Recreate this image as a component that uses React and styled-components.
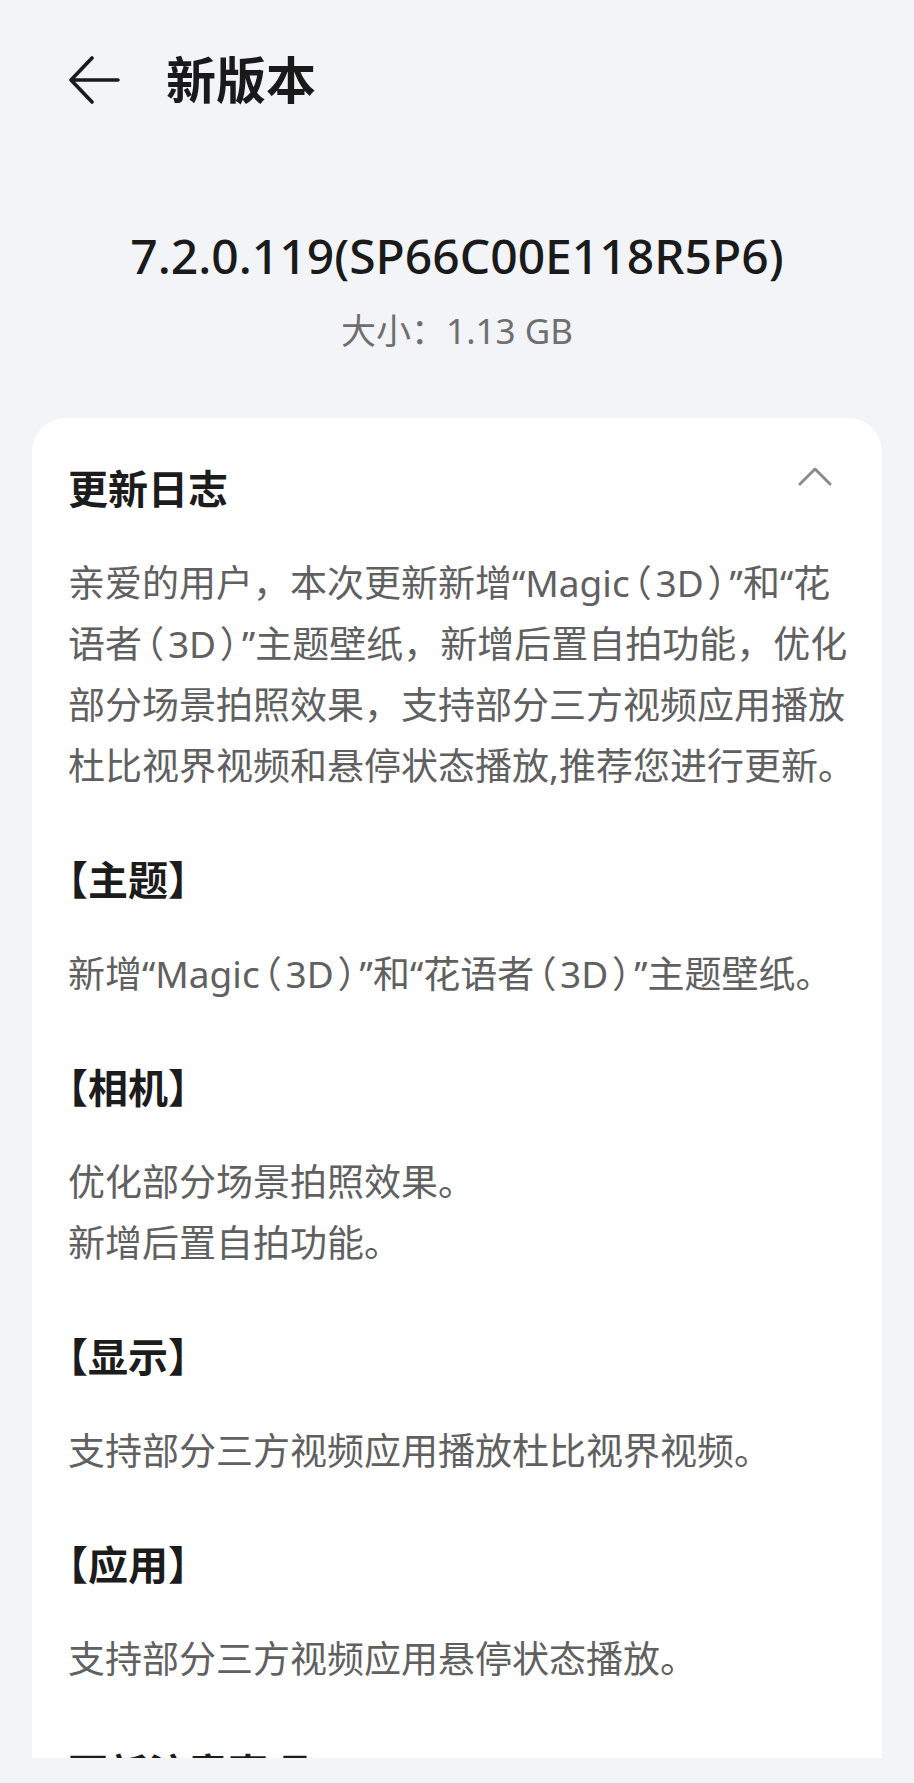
import styled, { createGlobalStyle } from "styled-components";

const GlobalStyle = createGlobalStyle`
  html, body {
    margin: 0;
    padding: 0;
    background: #f3f4f8;
  }
  body {
    font-family: "Noto Sans", "Noto Sans CJK SC", sans-serif;
    -webkit-font-smoothing: antialiased;
  }
`;

const Page = styled.div`
  width: 914px;
  height: 1783px;
  overflow: hidden;
  background: #f3f4f8;
  display: flex;
  flex-direction: column;
`;

const Header = styled.header`
  display: flex;
  align-items: center;
  gap: 46px;
  height: 60px;
  margin-top: 50px;
  padding-left: 68px;
`;

const BackButton = styled.button`
  display: flex;
  align-items: center;
  justify-content: center;
  width: 52px;
  height: 52px;
  padding: 0;
  border: none;
  background: none;
  color: #1a1a1a;
`;

const Title = styled.h1`
  margin: 0;
  font-size: 50px;
  line-height: 60px;
  font-weight: 700;
  color: #1a1a1a;
`;

const VersionBox = styled.div`
  display: flex;
  flex-direction: column;
  align-items: center;
  margin-top: 116px;
`;

const Version = styled.div`
  font-size: 48px;
  line-height: 60px;
  font-weight: 500;
  color: #1a1a1a;
`;

const Size = styled.div`
  margin-top: 23px;
  font-size: 35px;
  line-height: 44px;
  color: #6f6f6f;
`;

const Card = styled.section`
  margin: 65px 32px 0;
  height: 1340px;
  overflow: hidden;
  box-sizing: border-box;
  padding: 41px 36px 0;
  background: #ffffff;
  border-radius: 34px 34px 0 0;
`;

const CardHead = styled.div`
  display: flex;
  align-items: center;
  justify-content: space-between;
  height: 60px;
`;

const CardTitle = styled.h2`
  margin: 0;
  font-size: 40px;
  line-height: 60px;
  font-weight: 700;
  color: #1c1c1c;
`;

const Chevron = styled.span`
  display: flex;
  margin-right: 14px;
  margin-top: -26px;
  color: #8c8c8c;
`;

const Paragraph = styled.p`
  margin: 33px 0 0;
  font-size: 37px;
  line-height: 61px;
  color: #606060;
  white-space: nowrap;
`;

const Paren = styled.span`
  font-feature-settings: "halt";
  padding: 0 0.1em;
`;

const Section = styled.div`
  margin-top: 54px;
`;

const SectionTitle = styled.h3`
  margin: 0;
  font-size: 40px;
  line-height: 60px;
  font-weight: 700;
  color: #1c1c1c;
  font-feature-settings: "halt";
`;

const intro = [
  "亲爱的用户，本次更新新增“Magic（3D）”和“花",
  "语者（3D）”主题壁纸，新增后置自拍功能，优化",
  "部分场景拍照效果，支持部分三方视频应用播放",
  "杜比视界视频和悬停状态播放,推荐您进行更新。",
];

const sections = [
  { title: "【主题】", lines: ["新增“Magic（3D）”和“花语者（3D）”主题壁纸。"] },
  { title: "【相机】", lines: ["优化部分场景拍照效果。", "新增后置自拍功能。"] },
  { title: "【显示】", lines: ["支持部分三方视频应用播放杜比视界视频。"] },
  { title: "【应用】", lines: ["支持部分三方视频应用悬停状态播放。"] },
  { title: "更新注意事项", lines: ["升级前请备份重要数据。"] },
];

// full-width parens are set narrower, like the system font does
function withParens(text) {
  return text.split(/([（）])/).map((part, i) =>
    part === "（" || part === "）" ? <Paren key={i}>{part}</Paren> : part
  );
}

function Lines({ lines }) {
  return lines.map((line, i) => (
    <span key={i}>
      {withParens(line)}
      {i < lines.length - 1 && <br />}
    </span>
  ));
}

export default function App() {
  return (
    <>
      <GlobalStyle />
      <Page>
        <Header>
          <BackButton aria-label="返回">
            <svg width="52" height="48" viewBox="0 0 52 48" fill="none">
              <path
                d="M50 24H4M24 2L3 24l21 22"
                stroke="currentColor"
                strokeWidth="3.6"
                strokeLinecap="round"
                strokeLinejoin="round"
              />
            </svg>
          </BackButton>
          <Title>新版本</Title>
        </Header>

        <VersionBox>
          <Version>7.2.0.119(SP66C00E118R5P6)</Version>
          <Size>大小：1.13 GB</Size>
        </VersionBox>

        <Card>
          <CardHead>
            <CardTitle>更新日志</CardTitle>
            <Chevron>
              <svg width="34" height="20" viewBox="0 0 34 20" fill="none">
                <path
                  d="M2 18L17 3l15 15"
                  stroke="currentColor"
                  strokeWidth="3"
                  strokeLinecap="round"
                  strokeLinejoin="round"
                />
              </svg>
            </Chevron>
          </CardHead>
          <Paragraph>
            <Lines lines={intro} />
          </Paragraph>

          {sections.map((s) => (
            <Section key={s.title}>
              <SectionTitle>{s.title}</SectionTitle>
              <Paragraph>
                <Lines lines={s.lines} />
              </Paragraph>
            </Section>
          ))}
        </Card>
      </Page>
    </>
  );
}
